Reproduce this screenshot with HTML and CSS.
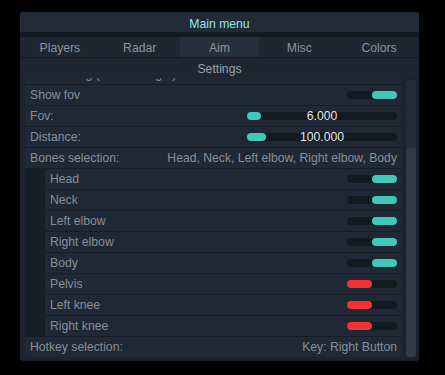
FILE: index.html
```html
<!DOCTYPE html>
<html lang="en">
<head>
  <meta charset="UTF-8">
  <title>Main menu</title>
  <link rel="stylesheet" href="styles.css">
</head>
<body>
  <div class="window">
    <div class="title-bar">Main menu</div>
    <div class="title-gap"></div>

    <!-- Tabs -->
    <div class="tabs">
      <div class="tab">Players</div>
      <div class="tab">Radar</div>
      <div class="tab active">Aim</div>
      <div class="tab">Misc</div>
      <div class="tab">Colors</div>
    </div>
    <div class="subtab">Settings</div>

    <div class="content">
      <div class="list">
        <div class="row cut">
          <span class="label">Aim locking (stick to target)</span>
        </div>

        <div class="row">
          <span class="label">Show fov</span>
          <div class="toggle on"><div class="knob"></div></div>
        </div>

        <div class="row">
          <span class="label">Fov:</span>
          <div class="slider">
            <div class="fill" style="width: 14px"></div>
            <span class="value">6.000</span>
          </div>
        </div>

        <div class="row">
          <span class="label">Distance:</span>
          <div class="slider">
            <div class="fill" style="width: 19px"></div>
            <span class="value">100.000</span>
          </div>
        </div>

        <div class="row">
          <span class="label">Bones selection:</span>
          <span class="info">Head, Neck, Left elbow, Right elbow, Body</span>
        </div>

        <!-- Bones -->
        <div class="sub">
          <div class="row">
            <span class="label">Head</span>
            <div class="toggle on"><div class="knob"></div></div>
          </div>
          <div class="row">
            <span class="label">Neck</span>
            <div class="toggle on"><div class="knob"></div></div>
          </div>
          <div class="row">
            <span class="label">Left elbow</span>
            <div class="toggle on"><div class="knob"></div></div>
          </div>
          <div class="row">
            <span class="label">Right elbow</span>
            <div class="toggle on"><div class="knob"></div></div>
          </div>
          <div class="row">
            <span class="label">Body</span>
            <div class="toggle on"><div class="knob"></div></div>
          </div>
          <div class="row">
            <span class="label">Pelvis</span>
            <div class="toggle off"><div class="knob"></div></div>
          </div>
          <div class="row">
            <span class="label">Left knee</span>
            <div class="toggle off"><div class="knob"></div></div>
          </div>
          <div class="row">
            <span class="label">Right knee</span>
            <div class="toggle off"><div class="knob"></div></div>
          </div>
        </div>

        <div class="row">
          <span class="label">Hotkey selection:</span>
          <span class="info">Key: Right Button</span>
        </div>
      </div>

      <div class="scrollbar">
        <div class="thumb"></div>
      </div>
    </div>
  </div>
</body>
</html>
```

FILE: styles.css
```css
body {
  margin: 0;
  padding: 12px 0 0 20px;
  background: #000;
  font-family: 'Liberation Sans', Arial, sans-serif;
  font-size: 12.2px;
}

.window {
  width: 399px;
  height: 349px;
  background: #1c232e;
  border-radius: 3px;
  display: flex;
  flex-direction: column;
  overflow: hidden;
}

.title-bar {
  height: 20px;
  line-height: 24px;
  text-align: center;
  background: #232b38;
  color: #93e4e0;
}

.title-gap {
  height: 5px;
  background: #141a22;
}

/* Tabs */
.tabs {
  display: grid;
  grid-template-columns: repeat(5, 1fr);
  height: 20px;
  background: #1f2632;
  border-bottom: 1px solid #151b24;
}

.tab {
  height: 20px;
  line-height: 22px;
  text-align: center;
  color: #8b939e;
}

.tab.active {
  background: #262f3c;
}

.subtab {
  height: 20px;
  line-height: 22px;
  text-align: center;
  background: #1f2632;
  color: #99a1aa;
}

.content {
  flex: 1;
  display: flex;
  padding: 0 3px 4px 5px;
  min-height: 0;
}

.list {
  width: 377px;
  overflow: hidden;
  background: #171d26;
}

.row {
  height: 20px;
  margin-bottom: 1px;
  padding: 0 5px;
  background: #202835;
  display: flex;
  align-items: center;
  justify-content: space-between;
  color: #868e99;
}

/* partly scrolled out of view */
.row.cut {
  margin-top: -14px;
}

.label {
  white-space: nowrap;
}

.info {
  white-space: nowrap;
}

.sub {
  padding-left: 20px;
}

/* Toggles */
.toggle {
  width: 50px;
  height: 8px;
  border-radius: 4px;
  background: #131921;
  display: flex;
}

.toggle .knob {
  width: 25px;
  height: 8px;
  border-radius: 4px;
}

.toggle.on {
  justify-content: flex-end;
}

.toggle.on .knob {
  background: #42c8b8;
}

.toggle.off .knob {
  background: #f03232;
}

/* Sliders */
.slider {
  position: relative;
  width: 150px;
  height: 8px;
  border-radius: 4px;
  background: #131921;
}

.slider .fill {
  height: 8px;
  border-radius: 4px;
  background: #42c8b8;
}

.slider .value {
  position: absolute;
  left: 0;
  right: 0;
  top: -4px;
  line-height: 16px;
  text-align: center;
  color: #e2e6ea;
}

/* Scrollbar */
.scrollbar {
  width: 10px;
  margin: 2px 0 0 4px;
  border-radius: 3px;
  background: #232b37;
  display: flex;
  flex-direction: column;
  justify-content: flex-end;
}

.scrollbar .thumb {
  height: 209px;
  border-radius: 3px;
  background: #303a47;
}
```
